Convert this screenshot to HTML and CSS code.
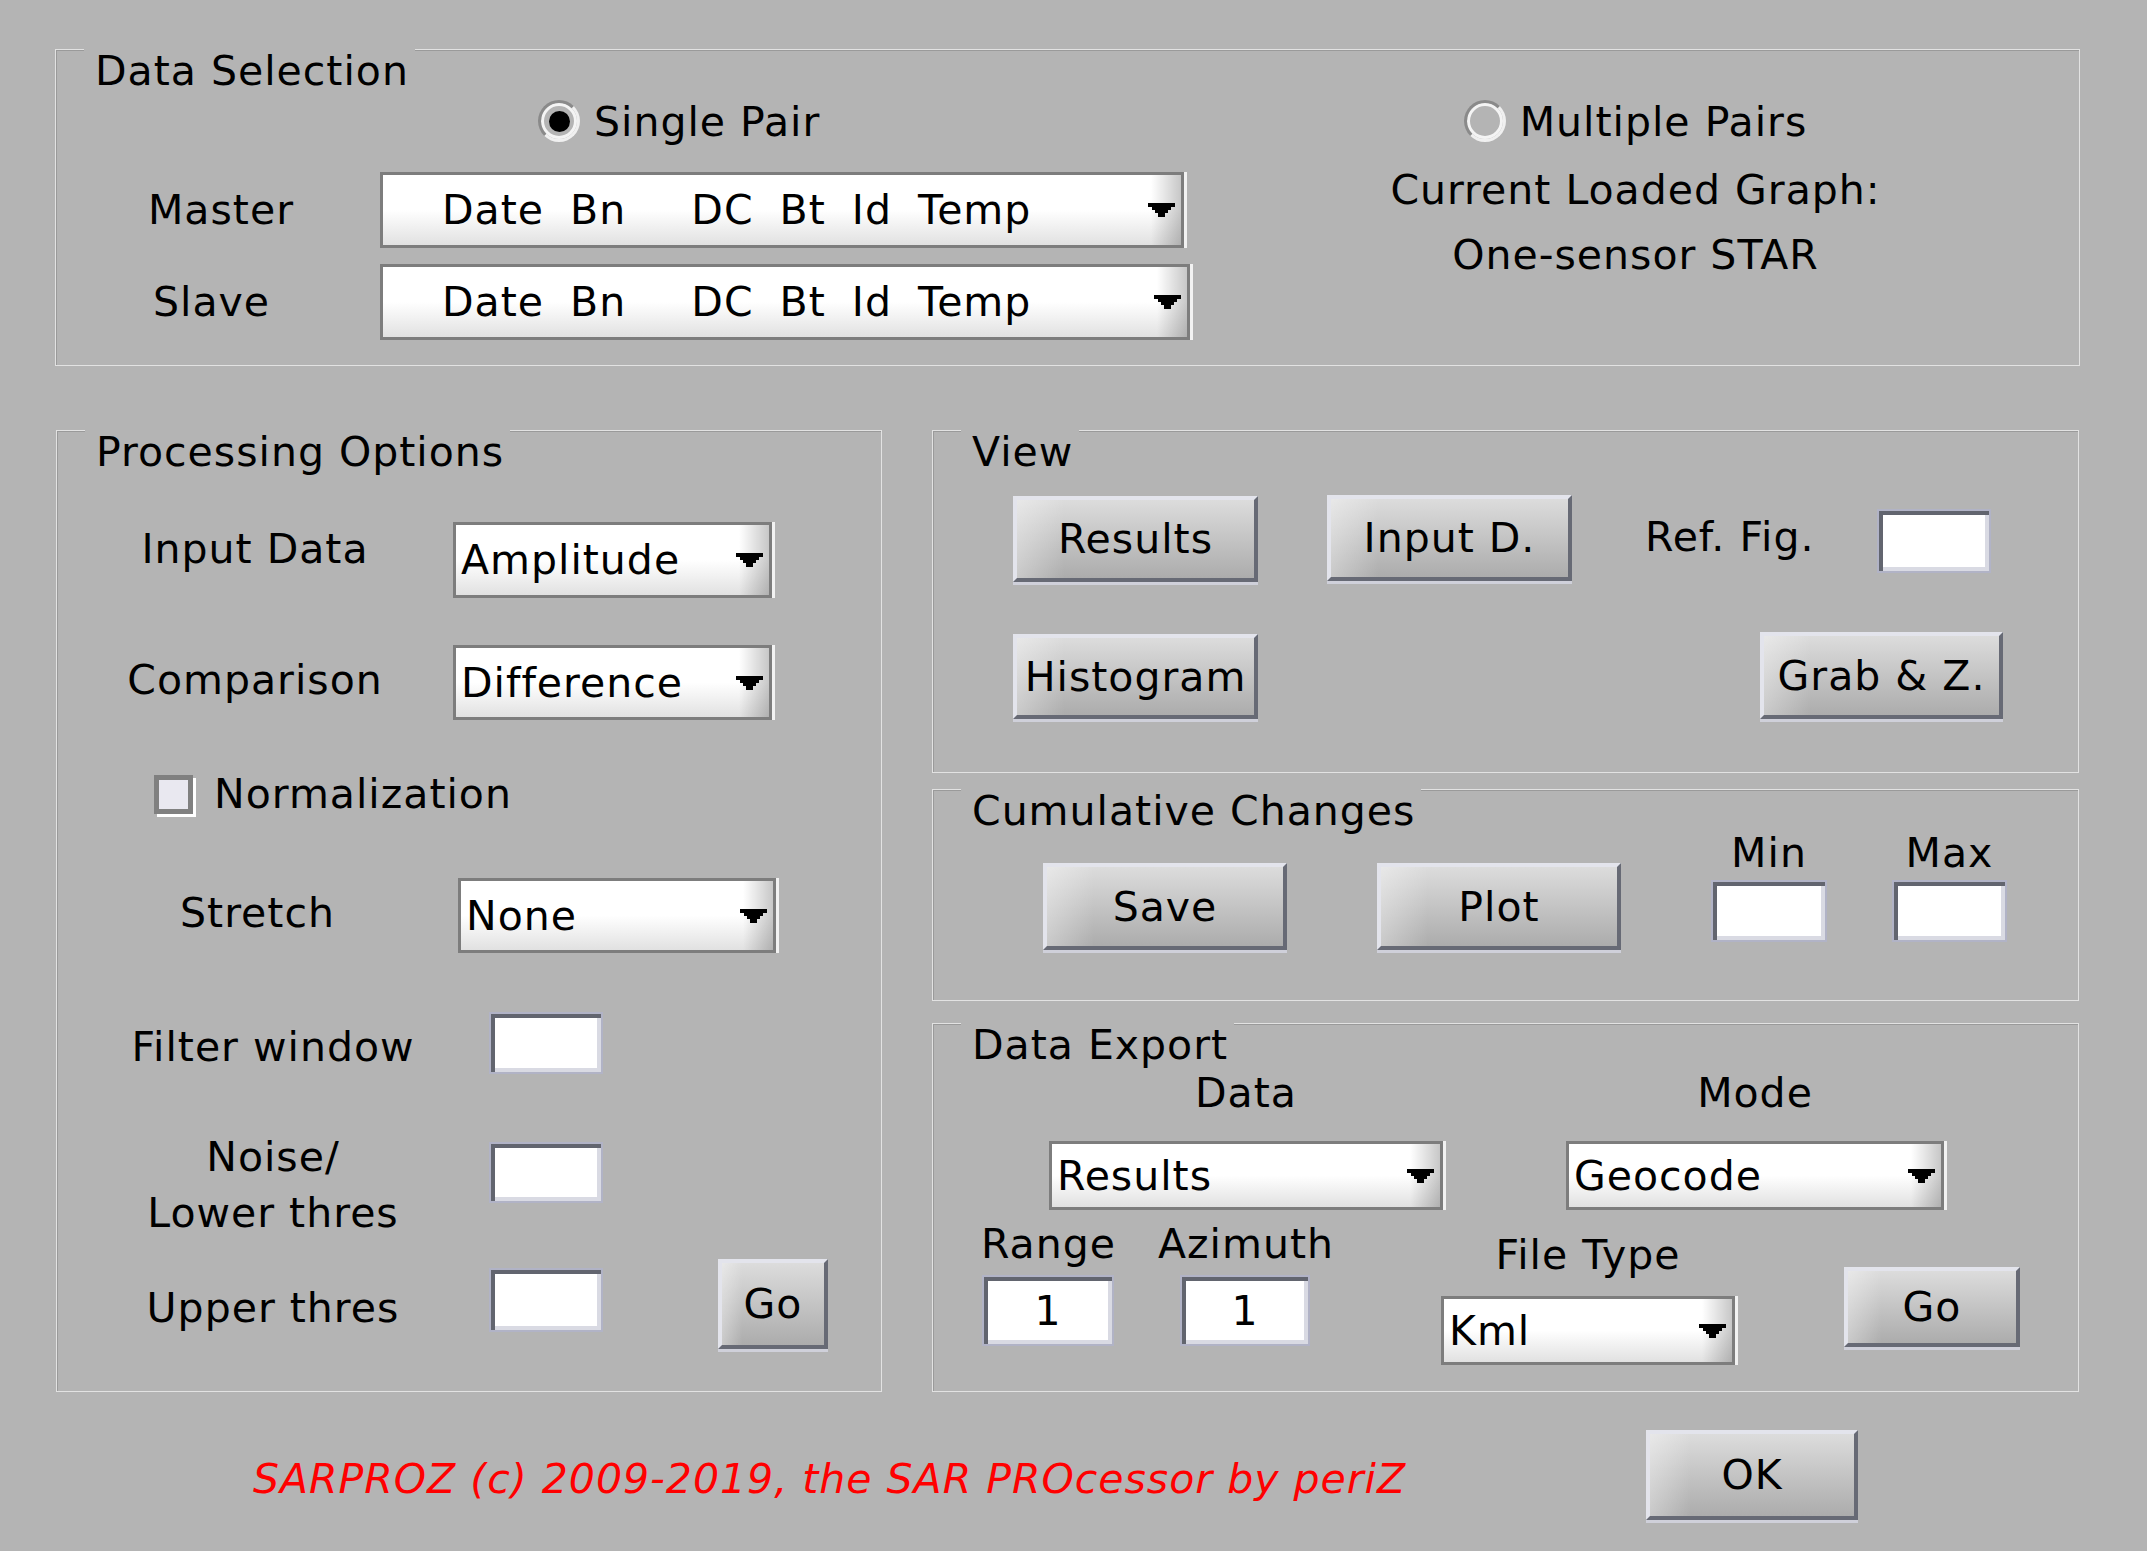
FILE: index.html
```html
<!doctype html>
<html>
<head>
	<meta charset="utf-8" />
	<title>SARPROZ - Change Detection</title>
	<link rel="stylesheet" href="styles.css">
</head>
<body>
<div class="app">

	<div class="panel sel">
		<div class="panel-title">Data Selection</div>
		<div class="sel-body">
			<div class="sel-left">
				<div class="radio-row sel-single"><span class="radio on"></span><span class="radio-label">Single Pair</span></div>
				<div class="row sel-row sel-master">
					<span class="sel-label">Master</span>
					<div class="popup popup-pair"><span>Date  Bn     DC  Bt  Id  Temp</span><svg viewBox="0 0 27 14"><path d="M0 0H27V4H23V7H20V10H17V14H10V10H7V7H4V4H0Z"/></svg></div>
				</div>
				<div class="row sel-row sel-slave">
					<span class="sel-label">Slave</span>
					<div class="popup popup-pair"><span>Date  Bn     DC  Bt  Id  Temp</span><svg viewBox="0 0 27 14"><path d="M0 0H27V4H23V7H20V10H17V14H10V10H7V7H4V4H0Z"/></svg></div>
				</div>
			</div>
			<div class="sel-right">
				<div class="radio-row sel-multi"><span class="radio"></span><span class="radio-label">Multiple Pairs</span></div>
				<div class="sel-info">Current Loaded Graph:</div>
				<div class="sel-info">One-sensor STAR</div>
			</div>
		</div>
	</div>

	<div class="mid">
		<div class="panel proc">
			<div class="panel-title">Processing Options</div>

			<div class="row p-input">
				<span class="plabel lab-a">Input Data</span>
				<div class="popup"><span>Amplitude</span><svg viewBox="0 0 27 14"><path d="M0 0H27V4H23V7H20V10H17V14H10V10H7V7H4V4H0Z"/></svg></div>
			</div>
			<div class="row p-comp">
				<span class="plabel lab-a">Comparison</span>
				<div class="popup"><span>Difference</span><svg viewBox="0 0 27 14"><path d="M0 0H27V4H23V7H20V10H17V14H10V10H7V7H4V4H0Z"/></svg></div>
			</div>
			<div class="row p-norm">
				<span class="check"></span>
				<span class="check-label">Normalization</span>
			</div>
			<div class="row p-stretch">
				<span class="plabel lab-b">Stretch</span>
				<div class="popup"><span>None</span><svg viewBox="0 0 27 14"><path d="M0 0H27V4H23V7H20V10H17V14H10V10H7V7H4V4H0Z"/></svg></div>
			</div>
			<div class="row p-filter">
				<span class="plabel lab-c">Filter window</span>
				<div class="edit"></div>
			</div>
			<div class="row p-noise">
				<span class="plabel lab-c">Noise/<br>Lower thres</span>
				<div class="edit"></div>
			</div>
			<div class="row p-upper">
				<span class="plabel lab-c">Upper thres</span>
				<div class="edit"></div>
				<div class="btn btn-go">Go</div>
			</div>
		</div>

		<div class="side">
			<div class="panel view">
				<div class="panel-title">View</div>
				<div class="row v-row1">
					<div class="btn btn-results">Results</div>
					<div class="btn btn-input">Input D.</div>
					<span class="ref-label">Ref. Fig.</span>
					<div class="edit ref-edit"></div>
				</div>
				<div class="row v-row2">
					<div class="btn btn-hist">Histogram</div>
					<div class="btn btn-grab">Grab &amp; Z.</div>
				</div>
			</div>

			<div class="panel cum">
				<div class="panel-title">Cumulative Changes</div>
				<div class="row c-row">
					<div class="btn btn-save">Save</div>
					<div class="btn btn-plot">Plot</div>
					<div class="lim lim-min">
						<span>Min</span>
						<div class="edit"></div>
					</div>
					<div class="lim lim-max">
						<span>Max</span>
						<div class="edit"></div>
					</div>
				</div>
			</div>

			<div class="panel export">
				<div class="panel-title">Data Export</div>
				<div class="row e-row1">
					<div class="e-col e-data">
						<div>Data</div>
						<div class="popup"><span>Results</span><svg viewBox="0 0 27 14"><path d="M0 0H27V4H23V7H20V10H17V14H10V10H7V7H4V4H0Z"/></svg></div>
					</div>
					<div class="e-col e-mode">
						<div>Mode</div>
						<div class="popup"><span>Geocode</span><svg viewBox="0 0 27 14"><path d="M0 0H27V4H23V7H20V10H17V14H10V10H7V7H4V4H0Z"/></svg></div>
					</div>
				</div>
				<div class="row e-row2">
					<div class="e-col e-range">
						<div>Range</div>
						<div class="edit">1</div>
					</div>
					<div class="e-col e-az">
						<div>Azimuth</div>
						<div class="edit">1</div>
					</div>
					<div class="e-col e-type">
						<div class="e-type-label">File Type</div>
						<div class="popup"><span>Kml</span><svg viewBox="0 0 27 14"><path d="M0 0H27V4H23V7H20V10H17V14H10V10H7V7H4V4H0Z"/></svg></div>
					</div>
					<div class="btn btn-ego">Go</div>
				</div>
			</div>
		</div>
	</div>

	<div class="foot">
		<div class="credit">SARPROZ (c) 2009-2019, the SAR PROcessor by periZ</div>
		<div class="btn btn-ok">OK</div>
	</div>

</div>
</body>
</html>
```

FILE: styles.css
```css
* { box-sizing: border-box; }
body { margin: 0; background: #b4b4b4; color: #000; font: 41px/48px "DejaVu Sans", "Liberation Sans", sans-serif; letter-spacing: 1px; }
.app { width: 2147px; height: 1551px; padding: 49px 0 0 55px; overflow: hidden; }

/* panels */
.panel { border: 1px solid #e2e2e2; box-shadow: inset 1px 1px 0 #9a9a9a; }
.panel-title { width: fit-content; margin: -3px 0 0 28px; padding: 0 6px 0 11px; background: #b4b4b4; white-space: nowrap; }
.row { display: flex; align-items: flex-start; }

/* controls */
.popup { display: flex; align-items: center; justify-content: space-between; height: 76px; padding: 0 6px 0 5px; border: 3px solid #7d7d7d; box-shadow: 3px 0 0 #f2f2f2; background: linear-gradient(to left, rgba(0,0,0,.22), rgba(0,0,0,0) 30px), linear-gradient(#fff 50%, #e1e1e1); white-space: pre; }
.popup svg { width: 27px; height: 14px; flex: none; shape-rendering: crispEdges; }
.popup-pair { padding-left: 59px; word-spacing: -1px; }

.btn { display: flex; align-items: center; justify-content: center; flex: none; border: 4px solid; border-color: #e3e4ec #676a75 #676a75 #e3e4ec; box-shadow: 0 3px 0 #cfd0da; background: linear-gradient(to right, rgba(255,255,255,.35), rgba(255,255,255,0) 20%), linear-gradient(#dcdcdc, #acacac); white-space: nowrap; }

.edit { display: flex; align-items: center; justify-content: center; flex: none; width: 114px; height: 62px; background: #fff; border: 2px solid #b1b3c6; box-shadow: inset 4px 4px 0 #62656f, inset -4px -4px 0 #d9dae3; }

.radio { display: flex; align-items: center; justify-content: center; flex: none; width: 42px; height: 42px; border-radius: 50%; border: 3px solid; border-color: #8a8a8a #f0f0f0 #f0f0f0 #8a8a8a; box-shadow: inset 0 0 0 3px #f4f4f4; }
.radio.on::after { content: ""; width: 21px; height: 21px; border-radius: 50%; background: #000; }
.radio-row { display: flex; align-items: flex-start; }
.radio-label { margin-left: 14px; }

.check { flex: none; width: 39px; height: 39px; border: 5px solid #808080; background: #e9e8f0; box-shadow: 3px 3px 0 #fff; }
.check-label { margin-left: 21px; }

/* data selection */
.sel { width: 2025px; height: 317px; }
.sel-body { display: flex; }
.sel-left { width: 1136px; }
.sel-single { margin: 5px 0 0 482px; }
.sel-single .radio-label, .sel-multi .radio-label { margin-top: -2px; }
.sel-row { align-items: center; }
.sel-master { margin-top: 26px; }
.sel-slave { margin-top: 16px; }
.sel-label { width: 324px; padding-left: 92px; }
.sel-slave .sel-label { padding-left: 97px; }
.sel-master .popup { width: 804px; }
.sel-slave .popup { width: 810px; }
.sel-right { flex: 1; display: flex; flex-direction: column; align-items: center; }
.sel-multi { margin-top: 5px; }
.sel-info { margin-top: 20px; }
.sel-info + .sel-info { margin-top: 17px; }

.mid { display: flex; margin-top: 64px; }

/* processing options */
.proc { width: 826px; height: 962px; margin-left: 1px; }
.plabel { flex: none; text-align: center; }
.lab-a { width: 396px; }
.lab-b { width: 401px; }
.lab-c { width: 432px; }
.p-input { margin-top: 46px; }
.p-input .plabel { margin-top: 3px; }
.p-input .popup { width: 319px; }
.p-comp { margin-top: 47px; }
.p-comp .plabel { margin-top: 11px; }
.p-comp .popup { width: 319px; height: 75px; }
.p-norm { margin-top: 50px; align-items: center; }
.p-norm .check { margin-left: 97px; }
.p-stretch { margin-top: 60px; }
.p-stretch .plabel { margin-top: 11px; }
.p-stretch .popup { width: 318px; height: 75px; }
.p-filter { margin-top: 59px; }
.p-filter .plabel { margin-top: 11px; }
.p-noise { margin-top: 55px; }
.p-noise .plabel { line-height: 56px; }
.p-noise .edit { margin-top: 13px; height: 61px; }
.p-upper { margin-top: 18px; }
.p-upper .plabel { margin-top: 25px; }
.p-upper .edit { margin-top: 9px; height: 64px; }
.btn-go { width: 110px; height: 90px; margin-left: 115px; }

.side { display: flex; flex-direction: column; width: 1147px; margin-left: 50px; }

/* view */
.view { height: 343px; }
.v-row1 { margin-top: 19px; }
.btn-results { width: 245px; height: 86px; margin: 1px 0 0 80px; }
.btn-input { width: 245px; height: 86px; margin-left: 69px; }
.ref-label { width: 232px; margin: 18px 0 0 73px; }
.ref-edit { height: 64px; margin-top: 14px; }
.v-row2 { margin-top: 50px; }
.btn-hist { width: 245px; height: 85px; margin: 2px 0 0 80px; }
.btn-grab { width: 243px; height: 87px; margin: 0 75px 0 auto; }

/* cumulative changes */
.cum { height: 212px; margin-top: 16px; }
.c-row { margin-top: -6px; }
.btn-save { width: 244px; height: 87px; margin: 34px 0 0 110px; }
.btn-plot { width: 244px; height: 87px; margin: 34px 0 0 90px; }
.lim { display: flex; flex-direction: column; align-items: center; flex: none; }
.lim .edit { margin-top: 3px; width: 100%; }
.lim-min { width: 116px; margin-left: 90px; }
.lim-max { width: 115px; margin-left: 65px; }

/* data export */
.export { height: 369px; margin-top: 22px; }
.e-col { flex: none; text-align: center; }
.e-row1 { margin-top: 0; }
.e-row1 .popup { height: 69px; margin-top: 24px; }
.e-data { width: 394px; margin-left: 116px; }
.e-mode { width: 378px; margin-left: 123px; }
.e-row2 { margin-top: 10px; }
.e-row2 .edit { height: 71px; margin: 7px auto 0; }
.e-range { width: 134px; margin-left: 48px; }
.e-range .edit { width: 132px; }
.e-az { width: 174px; margin-left: 43px; }
.e-az .edit { width: 130px; }
.e-type { width: 294px; margin-left: 109px; }
.e-type-label { margin-top: 11px; }
.e-type .popup { height: 69px; margin-top: 17px; }
.btn-ego { width: 176px; height: 80px; margin: 47px 0 0 109px; }

/* footer */
.foot { display: flex; align-items: center; margin-top: 38px; }
.credit { width: 1591px; padding-left: 198px; margin-top: 8px; color: #ff0000; font-style: italic; white-space: nowrap; }
.btn-ok { width: 212px; height: 90px; }
```
